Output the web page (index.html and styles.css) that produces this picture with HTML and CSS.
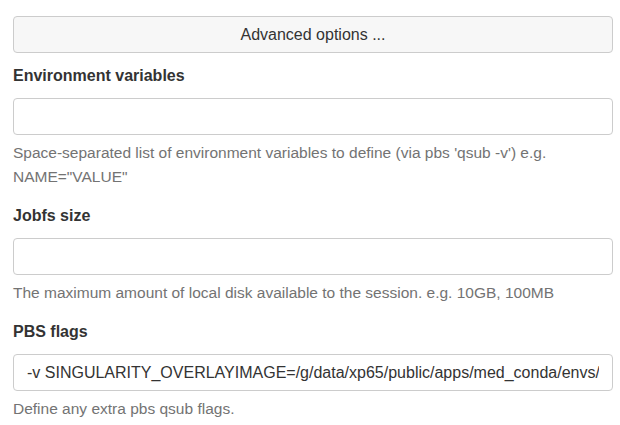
FILE: index.html
```html
<!DOCTYPE html>
<html>
<head>
<meta charset="utf-8">
<link rel="stylesheet" href="styles.css">
</head>
<body>
<div class="form">
  <button class="btn" type="button">Advanced options ...</button>
  <div class="group">
    <label class="label">Environment variables</label>
    <input class="input" type="text" value="">
    <div class="help">Space-separated list of environment variables to define (via pbs 'qsub -v') e.g. NAME="VALUE"</div>
  </div>
  <div class="group">
    <label class="label">Jobfs size</label>
    <input class="input" type="text" value="">
    <div class="help">The maximum amount of local disk available to the session. e.g. 10GB, 100MB</div>
  </div>
  <div class="group">
    <label class="label">PBS flags</label>
    <input class="input" type="text" value="-v SINGULARITY_OVERLAYIMAGE=/g/data/xp65/public/apps/med_conda/envs/analysis3.sqsh">
    <div class="help">Define any extra pbs qsub flags.</div>
  </div>
</div>
</body>
</html>
```
FILE: styles.css
```css
html, body {
  margin: 0;
  padding: 0;
  background: #ffffff;
}
body {
  font-family: "Liberation Sans", Arial, sans-serif;
  color: #212529;
}
.form {
  display: flex;
  flex-direction: column;
  padding: 16px 7px 0 13px;
  width: 600px;
}
.btn {
  height: 37px;
  width: 100%;
  background: #f7f7f7;
  border: 1px solid #cccccc;
  border-radius: 4px;
  font-family: inherit;
  font-size: 16px;
  color: #333333;
  padding: 0;
  margin: 0 0 11px 0;
}
.group {
  display: flex;
  flex-direction: column;
  margin-bottom: 15px;
}
.label {
  display: block;
  font-weight: bold;
  font-size: 16px;
  line-height: 24px;
  color: #333333;
  margin-bottom: 10px;
}
.input {
  box-sizing: border-box;
  height: 37px;
  width: 100%;
  border: 1px solid #cccccc;
  border-radius: 4px;
  padding: 0 13px;
  font-family: inherit;
  font-size: 16px;
  color: #333333;
  margin: 0;
  outline: none;
}
.help {
  font-size: 15.5px;
  line-height: 24px;
  color: #737373;
  margin-top: 6px;
}
```
